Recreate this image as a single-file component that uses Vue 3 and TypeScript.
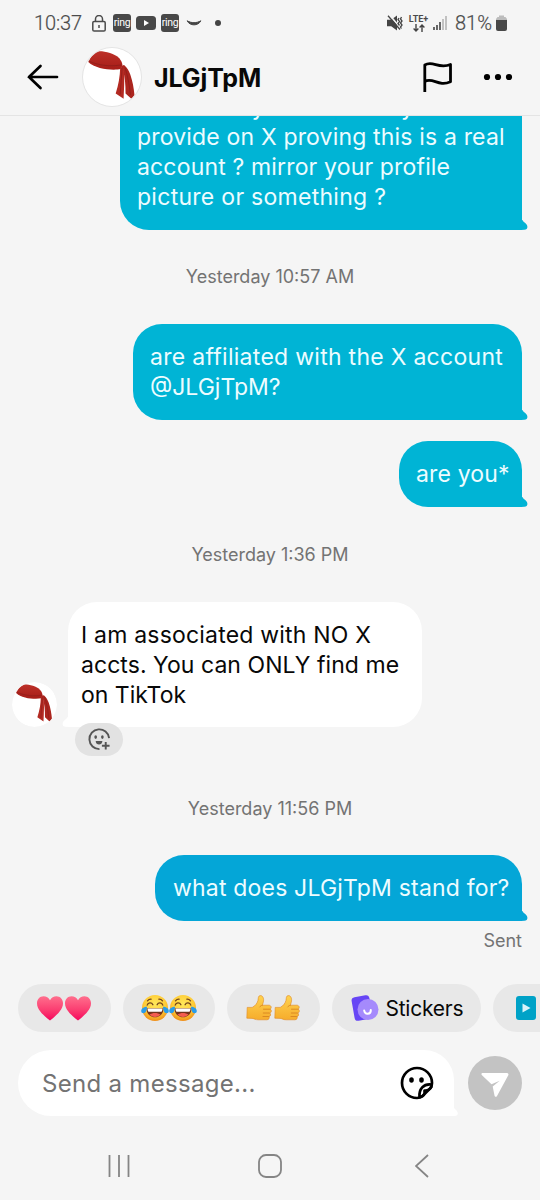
<script setup lang="ts">
interface Line {
  text: string
  spacing: number
}
interface Entry {
  id: string
  kind: 'stamp' | 'mine' | 'theirs'
  lines: Line[]
}

const entries: Entry[] = [
  {
    id: 'm1',
    kind: 'mine',
    lines: [
      { text: 'is there any verification you can', spacing: 0.15 },
      { text: 'provide on X proving this is a real', spacing: 0.17 },
      { text: 'account ? mirror your profile', spacing: 0.16 },
      { text: 'picture or something ?', spacing: 0.28 },
    ],
  },
  { id: 's1', kind: 'stamp', lines: [{ text: 'Yesterday 10:57 AM', spacing: 0 }] },
  {
    id: 'm2',
    kind: 'mine',
    lines: [
      { text: 'are affiliated with the X account', spacing: 0.28 },
      { text: '@JLGjTpM?', spacing: 0 },
    ],
  },
  { id: 'm3', kind: 'mine', lines: [{ text: 'are you*', spacing: 0.15 }] },
  { id: 's2', kind: 'stamp', lines: [{ text: 'Yesterday 1:36 PM', spacing: 0 }] },
  {
    id: 'm4',
    kind: 'theirs',
    lines: [
      { text: 'I am associated with NO X', spacing: 0.2 },
      { text: 'accts. You can ONLY find me', spacing: 0.05 },
      { text: 'on TikTok', spacing: 0 },
    ],
  },
  { id: 's3', kind: 'stamp', lines: [{ text: 'Yesterday 11:56 PM', spacing: 0 }] },
  { id: 'm5', kind: 'mine', lines: [{ text: 'what does JLGjTpM stand for?', spacing: 0.19 }] },
]
</script>

<template>
  <div class="phone">
    <svg class="defs" width="0" height="0" aria-hidden="true">
      <defs>
        <linearGradient id="heartFill" x1="0" y1="0" x2="0" y2="1">
          <stop offset="0" stop-color="#ff6f8d" /><stop offset=".55" stop-color="#fb3f72" /><stop offset="1" stop-color="#f5075d" />
        </linearGradient>
        <radialGradient id="faceFill" cx=".5" cy=".35" r=".65">
          <stop offset="0" stop-color="#ffe95c" /><stop offset=".65" stop-color="#ffca35" /><stop offset="1" stop-color="#ef8d18" />
        </radialGradient>
        <linearGradient id="thumbFill" x1="0" y1="0" x2="0" y2="1">
          <stop offset="0" stop-color="#ffd34f" /><stop offset="1" stop-color="#f6ac2c" />
        </linearGradient>
        <linearGradient id="clothFill" x1="0" y1="0" x2="0" y2="1">
          <stop offset="0" stop-color="#bd3028" /><stop offset="1" stop-color="#a61d18" />
        </linearGradient>
        <symbol id="bandana" viewBox="0 0 60 60">
          <circle cx="30" cy="30" r="30" fill="#fff" />
          <path d="M5.500 14.500C8 9 11.500 4.500 15.500 3.500c6-.5 17 2 22 7 2 2.300 3 4.500 3.300 7l-1.800 4.300C31 23.500 13 22 5.500 14.500Z" fill="url(#clothFill)" />
          <path d="M39 18.500l3.500-.8c3.500 3 5 6 6.500 10 2.300 7 3.500 13 4.300 21.500l-3.300 3.300-6-5.500c0-9-.5-18-3.300-26Z" fill="#ab251e" />
          <path d="m38.500 20 3.300-.3c1.500 9 .8 20 .2 32.800L33.800 47c3-9 4.300-17 4.700-27Z" fill="#b32a22" />
          <path d="M5.800 13.500c10 4.500 22 6 34 4M40.500 20c-.5 9-1.500 18-2 28M43.500 20.500c3 9 4.500 18 5.500 28" fill="none" stroke="#8c1d19" stroke-width=".8" />
        </symbol>
        <symbol id="heart" viewBox="0 0 28 28">
          <path d="M14 26.500C9 22.500 1 16.500 1 9.300 1 5 4 2.200 7.500 2.200c2.800 0 5.200 1.500 6.500 4 1.300-2.500 3.700-4 6.500-4C24 2.200 27 5 27 9.300c0 7.200-8 13.200-13 17.200Z" fill="url(#heartFill)" />
        </symbol>
        <symbol id="joy" viewBox="0 0 28 28">
          <circle cx="14" cy="14" r="13" fill="url(#faceFill)" />
          <path d="M5.500 14.300h17c0 5.500-3.500 9-8.500 9s-8.500-3.500-8.500-9Z" fill="#74331c" />
          <path d="M6.500 14.500h15c-.1 2-.6 3.200-1.200 3.200H7.700c-.7 0-1.100-1.200-1.200-3.200Z" fill="#fff" />
          <path d="M8.500 20.600c3-2.200 8-2.200 11 0-2.700 3.300-8.300 3.300-11 0Z" fill="#f45d50" />
          <path d="M6.200 11.200c.8-3 4.500-3 5.700-.5M16.100 10.700c1.200-2.500 4.900-2.500 5.700.5M6.500 6.800c1-1.200 2.300-1.700 3.600-1.600M17.900 5.200c1.300-.1 2.600.4 3.600 1.600" fill="none" stroke="#71431d" stroke-width="1.300" stroke-linecap="round" />
          <path d="M6 12.700C3 12.800.2 14.500.2 16.900c0 3 4 2.900 4.900.4.500-1.400.9-2.800.9-4.600ZM22 12.700c3 .1 5.800 1.800 5.800 4.200 0 3-4 2.900-4.900.4-.5-1.400-.9-2.800-.9-4.600Z" fill="#299cea" />
        </symbol>
        <symbol id="thumb" viewBox="0 0 28 28">
          <path d="M2.200 13.400h5c3-1.400 5.100-4.200 5.800-7.100.3-2 .1-4.500 2.100-4.700 3-.2 4.100 3.200 3.200 6.500l-.9 3.100h6.400c2.700 0 3.200 3.200 1.200 3.900 2 .8 1.700 3.600-.2 4 1.400 1 .9 3.200-.8 3.500.9 1.400-.2 3.200-2.200 3.200h-8.500c-3.200 0-4.200-1.300-6.200-1.400l-5.300-.2Z" fill="url(#thumbFill)" stroke="#df8826" stroke-width=".6" />
          <path d="M18.500 15.200h6.300M18.300 19h6M18 22.500h5.500M17.500 11.200c-1.400.2-2.200.9-2.700 1.700" fill="none" stroke="#d88420" stroke-width=".9" stroke-linecap="round" />
        </symbol>
      </defs>
    </svg>

    <div class="statusbar">
      <span class="clock">10:37</span>
      <svg class="lock" viewBox="0 0 14 17"><rect x=".8" y="6.500" width="12.400" height="9.600" rx="1.300" /><path d="M3.500 6V4a3.500 3.500 0 0 1 7 0v2M7 10v3" /></svg>
      <span class="ring">ring</span>
      <svg class="tube" viewBox="0 0 20 14"><rect width="20" height="14" rx="3.500" fill="#484848" /><path d="M8 4v6l5-3Z" fill="#fff" /></svg>
      <span class="ring">ring</span>
      <svg class="smile" viewBox="0 0 16 8"><path d="M1.200 1.800c2.500 5.400 11.100 5.400 13.600 0-4.200 2.500-9.400 2.500-13.600 0Z" fill="#444" stroke="#444" stroke-linejoin="round" /></svg>
      <span class="dot"></span>
      <span class="grow"></span>
      <svg class="mute" viewBox="0 0 16 16"><path d="M0 4.800h4.200L10 .5v15L4.200 11.200H0Z" fill="#444" /><path d="M2.500 0 13.500 13" stroke="#f5f5f5" stroke-width="1.800" /><path d="m1 .8 12 13.700M12 3l-1 1.500 1.500 2L11 8.500l1.500 2M14.500 2l-1 2 1.500 2-1.500 2 1.500 2-1.500 2 1 1.500" fill="none" stroke="#444" stroke-width="1.300" /></svg>
      <span class="lte"><b>LTE+</b><svg viewBox="0 0 12 8"><path d="M3 0v7M.6 4.600 3 7l2.400-2.400M9 8V1M6.600 3.400 9 1l2.400 2.400" /></svg></span>
      <svg class="signal" viewBox="0 0 14 14"><path d="M1 14v-3M4 14V9M7 14V6" stroke="#444" stroke-width="1.600" /><path d="M10 14V3M13 14V0" stroke="#b5b5b5" stroke-width="1.600" /></svg>
      <span class="percent">81%</span>
      <svg class="battery" viewBox="0 0 11 16"><path d="M3 2V.5h5V2h1.500L11 4v2H0V4l1.500-2Z" fill="#bcbcbc" /><path d="M0 5h11v9q0 2-2 2H2q-2 0-2-2Z" fill="#484848" /></svg>
    </div>

    <header class="header">
      <svg class="back" viewBox="0 0 32 26"><path d="M30 13H2M13.500 2 2 13l11.500 11" /></svg>
      <svg class="avatar big"><use href="#bandana" /></svg>
      <h1>JLGjTpM</h1>
      <span class="grow"></span>
      <svg class="flag" viewBox="0 0 30 32"><path d="M1.800 31V4c8-5 13.500 4.500 25.700-.5v17.300c-12.200 5.500-17.700-5-25.700-.3" /></svg>
      <svg class="more" viewBox="0 0 30 8"><circle cx="4" cy="4" r="3.100" /><circle cx="15" cy="4" r="3.100" /><circle cx="26" cy="4" r="3.100" /></svg>
    </header>

    <main class="chat">
      <div v-for="e in entries" :key="e.id" class="entry" :class="[e.kind, e.id]">
        <svg v-if="e.kind === 'theirs'" class="avatar small"><use href="#bandana" /></svg>
        <div class="body">
          <span v-for="l in e.lines" :key="l.text" class="line" :style="{ letterSpacing: `${l.spacing}px` }">{{ l.text }}</span>
          <svg v-if="e.kind !== 'stamp'" class="tail" viewBox="0 0 7 10"><path d="M0 0h1.500c.2 1 1.200 1.800 3 3.300C7.500 6 6.800 9.500 3.500 9.800L0 10Z" /></svg>
          <span v-if="e.kind === 'theirs'" class="react">
            <svg viewBox="0 0 24 24"><path d="M22 10.500A10.300 10.300 0 1 0 12 22" /><path d="M18.500 14.500v8M14.500 18.500h8" /><ellipse cx="8" cy="9.500" rx="1.400" ry="1.900" /><ellipse cx="15" cy="9.500" rx="1.400" ry="1.900" /><path class="mouth" d="M8 13.500h7c0 5-7 5-7 0Z" /></svg>
          </span>
        </div>
      </div>
      <div class="sent">Sent</div>
    </main>

    <div class="chips">
      <span class="chip pair"><svg><use href="#heart" /></svg><svg><use href="#heart" /></svg></span>
      <span class="chip pair"><svg><use href="#joy" /></svg><svg><use href="#joy" /></svg></span>
      <span class="chip pair"><svg><use href="#thumb" /></svg><svg><use href="#thumb" /></svg></span>
      <span class="chip stickers">
        <svg viewBox="0 0 28 28"><rect x="2" y="2" width="18" height="24" rx="3.500" transform="rotate(-10 11 14)" fill="#6746f5" /><circle cx="17" cy="15.500" r="10.500" fill="#a58afc" /><path d="M13.200 16.500c.5 4.500 6.800 4.300 6.600-.5" fill="none" stroke="#fff" stroke-width="2" stroke-linecap="round" /></svg>
        <span>Stickers</span>
      </span>
      <span class="chip video"><svg viewBox="0 0 20 24"><rect width="20" height="24" rx="3" fill="#00a2c7" /><path d="M6.500 7.500v9l8-4.500Z" fill="#d9f4fa" /></svg></span>
    </div>

    <div class="composer">
      <div class="field">
        <span class="placeholder">Send a message...</span>
        <svg class="sticker" viewBox="0 0 34 34"><path d="M32 17A15 15 0 1 0 17 32c2.500 0 4-.5 5.500-2l8-8c1-1 1.500-2.500 1.500-5Z" /><path d="M19.500 31c-.7-8 4-13.500 12-12.500M19.500 31c4.500-.5 5.500-2.500 5-6.500 3.500.3 5.500-.8 7-4" class="fold" /><ellipse cx="11.500" cy="14" rx="2.300" ry="2.700" /><ellipse cx="21.500" cy="14" rx="2.300" ry="2.700" /></svg>
        <svg class="tail" viewBox="0 0 7 10"><path d="M0 0 4 4C7 7 6 9.500 3 10H0Z" /></svg>
      </div>
      <div class="send"><svg viewBox="0 0 28 26"><path d="M2 1h23.500c1.800 0 2.500 1.200 1.500 2.800L16 24c-.7 1.300-2.200 1.100-2.500-.4l-1.800-9 7-5.800-8.200 3.400L1 3.200C-.2 2.200.4 1 2 1Z" fill="#fff" /></svg></div>
    </div>

    <nav class="nav">
      <svg class="recents" viewBox="0 0 22 24"><path d="M1.500 1v22M11 1v22M20.500 1v22" /></svg>
      <svg class="home" viewBox="0 0 24 24"><rect x="1" y="1" width="22" height="22" rx="7" /></svg>
      <svg class="prev" viewBox="0 0 14 24"><path d="M13 1 1 12l12 11" /></svg>
    </nav>
  </div>
</template>

<style>
html, body { background: #f5f5f5; }
</style>

<style scoped>
* { box-sizing: border-box; }
svg { display: block; flex: none; }
.phone { position: relative; width: 540px; height: 1200px; overflow: hidden; background: #f5f5f5; color: #080808; font-family: Inter, "Liberation Sans", sans-serif; display: flex; flex-direction: column; }
.defs { position: absolute; }
.grow { flex: 1; }
.statusbar { height: 46px; flex: none; display: flex; align-items: center; padding-left: 34px; padding-right: 33px; color: #4b4b4b; font-family: Roboto, sans-serif; font-size: 20px; }
.clock { width: 58px; font-weight: 300; letter-spacing: -.1px; -webkit-text-stroke: .2px #4b4b4b; }
.lock { width: 14px; height: 17px; margin-right: 7px; fill: none; stroke: #4b4b4b; stroke-width: 1.500; }
.ring { width: 18px; height: 18px; background: #484848; border-radius: 3px; color: #fff; font-size: 10.500px; line-height: 17px; text-align: center; letter-spacing: -.3px; }
.tube { width: 20px; height: 14px; margin: 0 5px; }
.smile { width: 16px; height: 8px; margin-left: 7px; }
.dot { width: 6px; height: 6px; border-radius: 50%; background: #444; margin-left: 13px; }
.mute { width: 16px; height: 16px; margin-right: 5px; }
.lte { width: 21px; display: flex; flex-direction: column; align-items: center; font-size: 9px; line-height: 9px; }
.lte b { font-weight: 700; }
.lte svg { width: 12px; height: 8px; fill: none; stroke: #444; stroke-width: 1.400; }
.signal { width: 14px; height: 14px; margin-left: 4px; }
.percent { margin-left: 8px; width: 41px; font-weight: 300; -webkit-text-stroke: .2px #4b4b4b; letter-spacing: 0; }
.battery { width: 11px; height: 16px; }
.header { height: 70px; flex: none; display: flex; align-items: center; padding: 0 27px 8px; border-bottom: 1px solid #e4e4e4; }
.back { width: 32px; height: 26px; fill: none; stroke: #000; stroke-width: 2.700; stroke-linecap: round; }
.avatar { border-radius: 50%; }
.big { width: 60px; height: 60px; margin-left: 23px; border: 1px solid #e5e5e5; }
h1 { margin: 2px 0 0 12px; font-size: 25px; line-height: 30px; font-weight: 700; letter-spacing: -.1px; }
.flag { width: 30px; height: 32px; fill: none; stroke: #000; stroke-width: 2.800; stroke-linejoin: round; margin-right: 30px; }
.more { width: 30px; height: 8px; }
.chat { height: 856px; flex: none; overflow: hidden; display: flex; flex-direction: column; }
.entry { display: flex; flex: none; }
.line { display: block; white-space: pre; }
.body { position: relative; font-size: 23px; line-height: 30px; }
.mine { justify-content: flex-end; padding-right: 18px; }
.mine .body { background: #00b4d5; color: #edfcff; border-radius: 29px 29px 0 29px; padding: 18px 0 18px 17px; }
.tail { position: absolute; width: 7px; height: 10px; right: -6px; bottom: 0; fill: #00b4d5; }
.m1 { margin-top: -42px; }
.m1 .body { width: 402px; }
.m2 .body { width: 389px; }
.m3 { margin-top: 21px; }
.m3 .body { width: 123px; }
.m5 .body { width: 367px; background: #04a6d7; padding-left: 18px; }
.m5 .tail { fill: #04a6d7; }
.stamp { justify-content: center; height: 94px; align-items: center; }
.stamp .body { font-size: 18px; line-height: 24px; color: #737373; }
.s2 { height: 95px; }
.s3 { height: 128px; padding-top: 36px; }
.theirs { padding-left: 12px; align-items: flex-end; }
.small { width: 45px; height: 45px; margin-right: 11px; }
.theirs .body { width: 354px; background: #fff; border-radius: 29px 29px 29px 0; padding: 18px 0 17px 13px; }
.theirs .tail { right: auto; left: -6px; fill: #fff; transform: scaleX(-1); }
.react { position: absolute; left: 7px; top: 121px; width: 48px; height: 33px; border-radius: 17px; background: #e2e2e2; display: flex; align-items: center; justify-content: center; }
.react svg { width: 23px; height: 23px; fill: none; stroke: #555; stroke-width: 2; }
.react ellipse, .react .mouth { fill: #555; stroke: none; }
.sent { align-self: flex-end; margin: 8px 18px 0 0; font-size: 18px; line-height: 24px; color: #737373; }
.chips { height: 72px; flex: none; display: flex; gap: 12px; padding: 12px 0 12px 18px; }
.chip { height: 48px; border-radius: 24px; background: #e8e8e8; display: flex; align-items: center; flex: none; }
.pair { width: 92.500px; justify-content: center; }
.pair svg { width: 28px; height: 28px; }
.stickers { width: 149px; padding-left: 19px; font-size: 21px; line-height: 30px; letter-spacing: -.25px; }
.stickers svg { width: 28px; height: 28px; margin-right: 7px; }
.stickers span { margin-top: 2px; }
.video { width: 150px; padding-left: 23px; }
.video svg { width: 20px; height: 24px; }
.composer { height: 84px; flex: none; display: flex; padding: 6px 18px 12px; align-items: center; }
.field { position: relative; width: 436px; height: 66px; background: #fff; border-radius: 33px 30px 0 33px; display: flex; align-items: center; justify-content: space-between; padding: 0 20px 0 24px; }
.field .tail { fill: #fff; right: -5px; }
.placeholder { font-size: 24px; letter-spacing: .3px; color: #737373; }
.sticker { width: 34px; height: 34px; fill: none; stroke: #000; stroke-width: 2.700; stroke-linejoin: round; }
.sticker ellipse { fill: #000; stroke: none; }
.send { width: 54px; height: 54px; margin-left: 14px; border-radius: 50%; background: #c3c3c3; display: flex; align-items: center; justify-content: center; }
.send svg { width: 28px; height: 26px; margin-top: 3px; }
.nav { height: 72px; flex: none; display: flex; align-items: center; padding: 3px 111px 0 108px; justify-content: space-between; fill: none; stroke: #858585; stroke-width: 1.800; }
.recents { width: 22px; height: 24px; }
.home { width: 24px; height: 24px; margin-right: 5px; }
.prev { width: 14px; height: 24px; }
</style>
